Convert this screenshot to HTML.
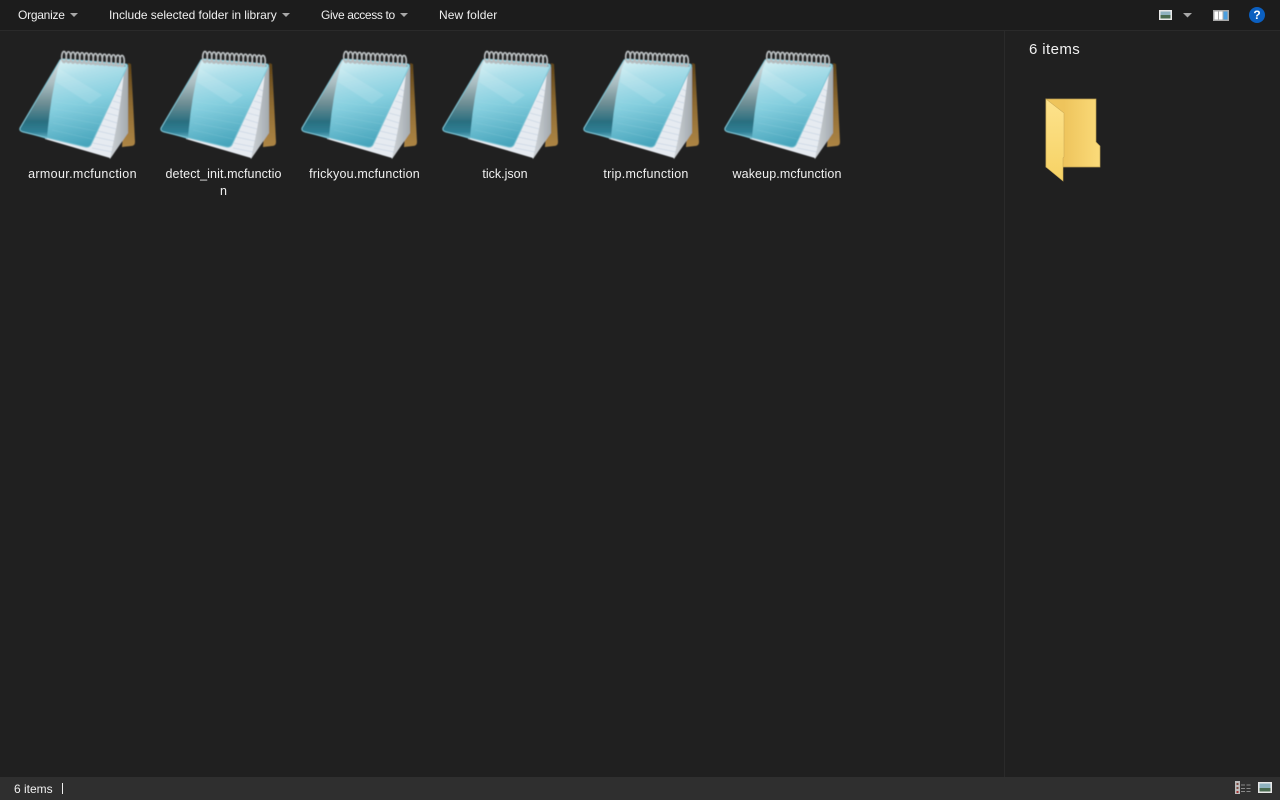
<!DOCTYPE html>
<html>
<head>
<meta charset="utf-8">
<style>
html,body{margin:0;padding:0;width:1280px;height:800px;overflow:hidden;background:#202020;font-family:"Liberation Sans",sans-serif;color:#fff}
.t{position:absolute;font-size:12px;white-space:nowrap;color:#f0f0f0;line-height:16px}
.c{position:absolute;width:140px;text-align:center;font-size:12.5px;line-height:17px;color:#f0f0f0;white-space:nowrap}
.a{position:absolute;width:0;height:0;border-left:4.5px solid transparent;border-right:4.5px solid transparent;border-top:4.5px solid #a8a8a8}
</style>
</head>
<body>
<div style="position:absolute;left:0;top:0;width:1280px;height:30px;background:#1c1c1c;border-bottom:1px solid #2a2a2a"></div>
<div style="position:absolute;left:1004px;top:31px;width:1px;height:746px;background:#2a2a2a"></div>
<div style="position:absolute;left:0;top:777px;width:1280px;height:23px;background:#2f2f2f"></div>

<div class="t" style="left:18px;top:7px;letter-spacing:-.25px">Organize</div><div class="a" style="left:70px;top:13px"></div>
<div class="t" style="left:109px;top:7px;letter-spacing:-.03px">Include selected folder in library</div><div class="a" style="left:282px;top:13px"></div>
<div class="t" style="left:321px;top:7px;letter-spacing:-.35px">Give access to</div><div class="a" style="left:400px;top:13px"></div>
<div class="t" style="left:439px;top:7px;letter-spacing:.1px">New folder</div>

<svg width="1280" height="800" style="position:absolute;left:0;top:0">
<defs>
<filter id="s" x="-5%" y="-5%" width="110%" height="110%"><feGaussianBlur stdDeviation=".4"/></filter>
<linearGradient id="br2" x1="0" y1="0" x2="0" y2="1"><stop offset="0" stop-color="#5f4419"/><stop offset=".5" stop-color="#8f6c33"/><stop offset="1" stop-color="#ad8545"/></linearGradient>
<linearGradient id="pg" x1="0" y1="0" x2="1" y2="0"><stop offset="0" stop-color="#d8dce0"/><stop offset="1" stop-color="#a3aaaf"/></linearGradient>
<linearGradient id="gl" x1="0" y1="0" x2="0" y2="1"><stop offset="0" stop-color="#d5e2e5"/><stop offset=".3" stop-color="#aabdc1"/><stop offset=".55" stop-color="#6f8f95"/><stop offset=".78" stop-color="#2b6f80"/><stop offset=".91" stop-color="#2f8096"/><stop offset="1" stop-color="#6bb5c8"/></linearGradient>
<linearGradient id="cy" x1="0.2" y1="0" x2="0.5" y2="1"><stop offset="0" stop-color="#e4f5f8"/><stop offset=".25" stop-color="#b0e0ea"/><stop offset=".55" stop-color="#86cfdf"/><stop offset="1" stop-color="#48a5bc"/></linearGradient>
<linearGradient id="fb" x1="0" y1="0" x2="1" y2="0"><stop offset=".33" stop-color="#eec45c"/><stop offset="1" stop-color="#fbdb7a"/></linearGradient>
<linearGradient id="ff" x1="0" y1="0" x2="0" y2="1"><stop offset="0" stop-color="#fde28c"/><stop offset="1" stop-color="#f6d264"/></linearGradient>
<g id="n" filter="url(#s)">
 <path d="M128 63 L131 64 Q133 100 135 142 Q135 146 131 146 L122 147 Z" fill="url(#br2)"/>
 <path d="M122 78 L126 66 L128 67 L128 133 L110 159 L106 150 Z" fill="url(#pg)"/>
 <path d="M45 139 L50 100 L124 72 Q120 115 110 158 Z" fill="#e6ebf1"/>
 <g stroke="#a9bcd4" stroke-width=".7" opacity=".45">
  <path d="M92 148 L112 152"/><path d="M93 143 L113 147"/><path d="M95 137 L114 141"/><path d="M98 131 L115 135"/><path d="M101 125 L116 129"/><path d="M104 119 L117 123"/><path d="M107 113 L118 116"/><path d="M110 107 L119 110"/><path d="M113 101 L120 103"/><path d="M116 95 L121 97"/><path d="M118 89 L122 91"/>
 </g>
 <path d="M60 60 Q61 59 63 59 L126 64 Q128 65 127 67 L91 145 Q89 148 85 147 L23 132 Q19 131 20 128 Z" fill="url(#cy)"/>
 <path d="M60 60 Q60.500 59.500 62 59 L58 68 Q50 100 47 139 L23 132 Q19 131 20 128 Z" fill="url(#gl)"/>
 <path d="M56 82 L90 104 L102 95 L58 68 Z" fill="#fff" opacity=".12"/>
 <g stroke="#aee0ea" stroke-width=".6" opacity=".25">
  <path d="M52 130 L92 139"/><path d="M53 123 L96 131"/><path d="M54 116 L100 124"/><path d="M54 109 L103 116"/><path d="M55 102 L107 108"/>
 </g>
 <path d="M60 60 Q61 59 63 59 L126 64 Q128 65 127 67 L91 145 Q89 148 85 147 L23 132 Q19 131 20 128 Z" fill="none" stroke="#7fc6d6" stroke-width="1"/>
 <path d="M62 61 L126 66" stroke="#5a6a70" stroke-width="2" opacity=".4"/>
 <g fill="none" stroke="#b9bec0" stroke-width="1.700">
  <ellipse cx="64" cy="57" rx="2.300" ry="5.500"/><ellipse cx="68.500" cy="57.300" rx="2.300" ry="5.500"/><ellipse cx="73" cy="57.600" rx="2.300" ry="5.500"/><ellipse cx="77.500" cy="57.900" rx="2.300" ry="5.500"/><ellipse cx="82" cy="58.200" rx="2.300" ry="5.500"/><ellipse cx="86.500" cy="58.500" rx="2.300" ry="5.500"/><ellipse cx="91" cy="58.800" rx="2.300" ry="5.500"/><ellipse cx="95.500" cy="59.100" rx="2.300" ry="5.500"/><ellipse cx="100" cy="59.400" rx="2.300" ry="5.500"/><ellipse cx="104.500" cy="59.700" rx="2.300" ry="5.500"/><ellipse cx="109" cy="60" rx="2.300" ry="5.500"/><ellipse cx="113.500" cy="60.300" rx="2.300" ry="5.500"/><ellipse cx="118" cy="60.600" rx="2.300" ry="5.500"/><ellipse cx="122" cy="61" rx="2.300" ry="5.500"/>
 </g>
</g>
</defs>
<use href="#n"/>
<use href="#n" transform="translate(141 0)"/>
<use href="#n" transform="translate(282 0)"/>
<use href="#n" transform="translate(423 0)"/>
<use href="#n" transform="translate(564 0)"/>
<use href="#n" transform="translate(705 0)"/>

<path d="M1046 99 L1096 99 L1096 142 L1100 146 L1100 167 L1046 167 Z" fill="url(#fb)" stroke="#b89c50" stroke-width=".7"/>
<path d="M1046 99 L1064 113 L1064 157 L1063 158 L1063 181 L1046 167 Z" fill="url(#ff)" stroke="#cfae58" stroke-width=".6"/>

<g>
<rect x="1159" y="10" width="13" height="10" fill="#e8e8e8"/><rect x="1160.500" y="11.500" width="10" height="7" fill="#8fb2bf"/><rect x="1160.500" y="15" width="10" height="3.500" fill="#4a6b50"/>
<path d="M1183 13 L1192 13 L1187.500 17.500 Z" fill="#a8a8a8"/>
<rect x="1213" y="10" width="16" height="11" fill="#a8a8a8"/><rect x="1214.500" y="11.500" width="3.500" height="8" fill="#fff"/><rect x="1219" y="11.500" width="3.500" height="8" fill="#fff"/><rect x="1223.500" y="11.500" width="4" height="8" fill="#4b9fe0"/>
<circle cx="1257" cy="15" r="8" fill="#0b5fc0"/>

<rect x="1235" y="781" width="5" height="13" fill="#bcbcbc"/><rect x="1236.500" y="783" width="2" height="2" fill="#7d4a40"/><rect x="1236.500" y="787" width="2" height="2" fill="#7d4a40"/><rect x="1236.500" y="791" width="2" height="2" fill="#a03030"/>
<path d="M1241 785h4M1246.500 785h4M1241 788.500h4M1246.500 788.500h4M1241 791.500h4M1246.500 791.500h4" stroke="#8a8a8a" stroke-width="1"/>
<rect x="1258" y="782" width="14" height="11" fill="#e8e8e8"/><rect x="1259.500" y="783.500" width="11" height="8" fill="#8fb2bf"/><rect x="1259.500" y="788" width="11" height="3.500" fill="#4a6b50"/>
</g>
</svg>
<div style="position:absolute;left:1249px;top:7px;width:16px;text-align:center;font-size:12px;font-weight:bold;line-height:16px;color:#fff">?</div>

<div class="c" style="left:12.500px;top:166px;letter-spacing:.35px">armour.mcfunction</div>
<div class="c" style="left:153.500px;top:166px;letter-spacing:.1px">detect_init.mcfunctio<br>n</div>
<div class="c" style="left:294.500px;top:166px;letter-spacing:.2px">frickyou.mcfunction</div>
<div class="c" style="left:435px;top:166px">tick.json</div>
<div class="c" style="left:576px;top:166px;letter-spacing:.27px">trip.mcfunction</div>
<div class="c" style="left:717px;top:166px;letter-spacing:.12px">wakeup.mcfunction</div>

<div style="position:absolute;left:1029px;top:40px;font-size:15px;line-height:20px;color:#f0f0f0;letter-spacing:.4px">6 items</div>
<div class="t" style="left:14px;top:781px">6 items</div>
<div style="position:absolute;left:62px;top:783px;width:1px;height:11px;background:#f0f0f0"></div>
</body>
</html>
